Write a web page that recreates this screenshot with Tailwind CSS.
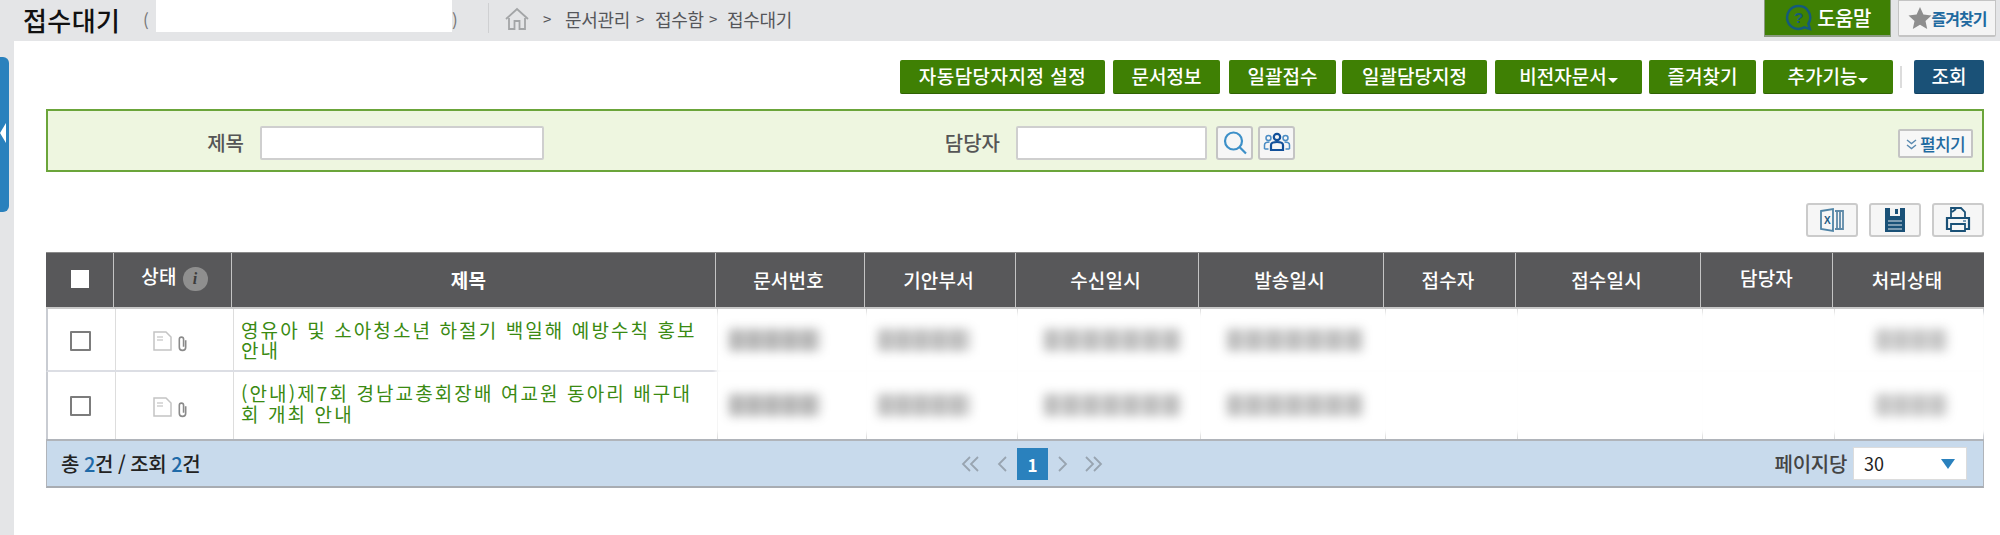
<!DOCTYPE html>
<html lang="ko"><head><meta charset="utf-8">
<script src="https://cdn.jsdelivr.net/npm/@tailwindcss/browser@4"></script>
</head>
<body class="m-0">
<div class="w-[2000px] h-[535px] bg-white overflow-hidden relative font-['Noto_Sans_CJK_KR','Noto_Sans',sans-serif]">
  <!-- top bar -->
  <header class="h-[41px] bg-[#e4e5e7] flex items-start">
    <h1 class="ml-[23px] mt-[3px] w-[100px] text-[26px] leading-[34px] font-medium text-[#111] tracking-[0.400px] whitespace-nowrap">접수대기</h1>
    <span class="ml-[20px] mt-[5px] text-[17px] leading-[30px] text-[#777] w-[13px]">(</span>
    <div class="w-[296px] h-[32px] bg-white"></div>
    <span class="mt-[5px] text-[17px] leading-[30px] text-[#777] w-[36px]">)</span>
    <div class="w-px h-[30px] mt-[3px] bg-[#cfd0d2]"></div>
    <svg class="ml-[16px] mt-[7px]" width="24" height="23" viewBox="0 0 24 23" fill="none" stroke="#a3a5a7" stroke-width="1.800"><path d="M1 12 12 2l11 10"/><path d="M4 11v11h5.500v-8h5v8H20V11"/></svg>
    <nav class="ml-[14px] mt-[4px] flex text-[18px] leading-[30px] text-[#55565a] tracking-[-0.300px] whitespace-nowrap">
      <span class="w-[22px] text-[15px]">&gt;</span><span class="w-[71px]">문서관리</span><span class="w-[19px] text-[15px]">&gt;</span><span class="w-[72px]">접수함</span><span class="w-[0px] text-[15px] -ml-[18px] mr-[18px]">&gt;</span><span>접수대기</span>
    </nav>
    <div class="ml-auto flex items-start">
      <button class="w-[127px] h-[37px] bg-[#3f8004] border-b-2 border-x border-[#8a9a80] flex items-center justify-center gap-[4px] text-white text-[20px] font-medium tracking-[-0.500px]">
        <svg width="29" height="29" viewBox="0 0 28 28" fill="none" stroke="#155a7a" stroke-width="2.400"><path d="M14 3a11 11 0 1 0 5.500 20.500L25 25l-1.500-5A11 11 0 0 0 14 3Z"/><text x="14" y="19.500" text-anchor="middle" font-size="15" font-weight="700" fill="#155a7a" stroke="none" font-family="Liberation Sans">?</text></svg>
        도움말
      </button>
      <button class="ml-[7px] mr-[4px] w-[98px] h-[37px] bg-[#f4f4f4] border border-b-2 border-[#c4c4c4] rounded-b-[2px] flex items-center justify-center text-[#1f6aa0] text-[16px] font-bold tracking-[-1px] whitespace-nowrap">
        <svg width="24" height="24" viewBox="0 0 24 24" fill="#8e8e8e"><path d="m12 1 3.400 7.500 8.100.9-6 5.500 1.700 8L12 18.800 4.800 22.900l1.700-8-6-5.500 8.100-.9Z"/></svg>즐겨찾기
      </button>
    </div>
  </header>

  <div class="flex h-[494px]">
    <aside class="w-[14px] bg-[#e4e5e7] relative shrink-0">
      <div class="absolute left-0 top-[16px] w-[9px] h-[155px] bg-[#2a81bd] rounded-r-[6px]"></div>
      <div class="absolute left-0 top-[82px] w-0 h-0 border-y-[10px] border-y-transparent border-r-[6px] border-r-white"></div>
    </aside>
    <main class="flex-1 pl-[32px] pr-[16px]">
      <!-- action buttons -->
      <div class="mt-[19px] h-[34px] flex justify-end items-stretch text-white text-[19px] font-medium whitespace-nowrap">
        <button class="w-[205px] bg-[#3f8004] border-b border-[#2f6203] rounded-[2px] tracking-[0.500px]">자동담당자지정 설정</button>
        <button class="ml-[8px] w-[107px] bg-[#3f8004] border-b border-[#2f6203] rounded-[2px]">문서정보</button>
        <button class="ml-[9px] w-[107px] bg-[#3f8004] border-b border-[#2f6203] rounded-[2px]">일괄접수</button>
        <button class="ml-[6px] w-[145px] bg-[#3f8004] border-b border-[#2f6203] rounded-[2px]">일괄담당지정</button>
        <button class="ml-[8px] w-[147px] bg-[#3f8004] border-b border-[#2f6203] rounded-[2px] flex items-center justify-center">비전자문서<span class="mt-[7px] ml-[1px] w-0 h-0 border-x-[5px] border-x-transparent border-t-[5px] border-t-white"></span></button>
        <button class="ml-[7px] w-[107px] bg-[#3f8004] border-b border-[#2f6203] rounded-[2px]">즐겨찾기</button>
        <button class="ml-[7px] w-[130px] bg-[#3f8004] border-b border-[#2f6203] rounded-[2px] flex items-center justify-center">추가기능<span class="mt-[7px] ml-[1px] w-0 h-0 border-x-[5px] border-x-transparent border-t-[5px] border-t-white"></span></button>
        <div class="ml-[7px] mt-[6px] w-[2px] h-[22px] bg-[#dcdcdc]"></div>
        <button class="ml-[12px] w-[70px] bg-[#1a5177] border-b border-[#12405f] rounded-[2px]">조회</button>
      </div>

      <!-- search panel -->
      <section class="mt-[15px] h-[63px] border-2 border-[#6ba53a] bg-[#eef6e0] flex items-start pt-[15px] text-[20px] font-medium text-[#555]">
        <label class="w-[196px] text-right leading-[34px]">제목</label>
        <input class="ml-[16px] w-[284px] h-[34px] bg-white border-2 border-[#cfcfcf] rounded-[2px]">
        <label class="w-[456px] text-right leading-[34px]">담당자</label>
        <input class="ml-[16px] w-[191px] h-[34px] bg-white border-2 border-[#cfcfcf] rounded-[2px]">
        <button class="ml-[9px] w-[37px] h-[34px] bg-[#f6f6f6] border-2 border-[#c4c4c4] rounded-[3px] flex items-center justify-center">
          <svg width="26" height="26" viewBox="0 0 26 26" fill="none" stroke="#3d90c8" stroke-width="2.200"><circle cx="11.500" cy="11" r="8.500"/><path d="m17.500 17 6.500 6.500"/></svg>
        </button>
        <button class="ml-[5px] w-[37px] h-[34px] bg-[#f6f6f6] border-2 border-[#c4c4c4] rounded-[3px] flex items-center justify-center">
          <svg width="28" height="22" viewBox="0 0 28 22" fill="none"><g stroke="#4a8cc4" stroke-width="1.500"><circle cx="5.500" cy="6" r="2.500"/><circle cx="22.500" cy="6" r="2.500"/><path d="M1.500 17v-4c0-2 2-3 5-3M26.500 17v-4c0-2-2-3-5-3M1.500 17h4M26.500 17h-4"/></g><g stroke="#12509a" stroke-width="2.200"><circle cx="14" cy="5" r="3.200"/><path d="M8 18v-5c0-2 2-3 6-3s6 1 6 3v5Z"/></g></svg>
        </button>
        <button class="ml-auto mr-[9px] mt-[3px] w-[75px] h-[29px] bg-[#f7f7f7] border-2 border-[#c4c4c4] rounded-[2px] flex items-center justify-center gap-[3px] text-[#1f6aa0] text-[17px] font-medium tracking-[-0.600px] whitespace-nowrap">
          <svg width="11" height="12" viewBox="0 0 11 12" fill="none" stroke="#5a8ab0" stroke-width="1.400"><path d="m1 2 4.500 3.500L10 2M1 7l4.500 3.500L10 7"/></svg>펼치기
        </button>
      </section>

      <!-- export icons -->
      <div class="mt-[31px] h-[34px] flex justify-end gap-[11px]">
        <button class="w-[52px] h-[34px] bg-[#f6f6f6] border-2 border-[#cbcbcb] rounded-[3px] flex items-center justify-center">
          <svg width="28" height="26" viewBox="0 0 28 26" fill="none"><path d="M3 4 15 2v22L3 22Z" stroke="#4f84a6" stroke-width="1.800"/><text x="6" y="17" font-size="10" font-weight="700" fill="#1d5a82" font-family="Liberation Sans">X</text><path d="M17 4h8v18h-8M19 4v18M22 4v18" stroke="#5f8aa8" stroke-width="1.800"/></svg>
        </button>
        <button class="w-[52px] h-[34px] bg-[#f6f6f6] border-2 border-[#cbcbcb] rounded-[3px] flex items-center justify-center">
          <svg width="22" height="26" viewBox="0 0 22 26"><path d="M1 1h20v24H1Z" fill="#1a5177"/><path d="M6 1h10v8H6Z" fill="#f2f2f2"/><path d="M11 2h3v5h-3Z" fill="#1a5177"/><path d="M4 13h14v2H4ZM4 17h14v2H4ZM4 21h14v2H4Z" fill="#7d9cb2"/></svg>
        </button>
        <button class="w-[52px] h-[34px] bg-[#f6f6f6] border-2 border-[#cbcbcb] rounded-[3px] flex items-center justify-center">
          <svg width="26" height="28" viewBox="0 0 26 28" fill="none" stroke="#1a5177" stroke-width="1.800"><path d="M6 12V2h10l4 4v6M7 6l4-3"/><path d="M2 12h22v11H2Z" stroke-width="2.200"/><path d="M6 18h14v7H6Z" fill="#f6f6f6"/><path d="M18 15h3" stroke="#6d95b0"/></svg>
        </button>
      </div>

      <!-- table -->
      <section class="mt-[15px] relative w-[1938px] text-[#111]">
        <div class="grid grid-cols-[68px_118px_484px_149px_151px_183px_185px_132px_185px_132px_151px] h-[57px] bg-[#58585a] border-t border-[#8a8a8a] border-b-2 border-b-[#c9c9c9] text-white text-[19px] font-medium tracking-[0.200px] divide-x divide-[#c4c4c4]">
          <div class="flex items-center justify-center pb-[2px]"><span class="w-[18px] h-[18px] bg-white"></span></div>
          <div class="flex items-start justify-center gap-[6px] pt-[11px] pl-[4px]"><span class="leading-[24px]">상태</span><span class="w-[25px] h-[24px] mt-[3px] rounded-full bg-[#8f8f8f] text-[#3d3d3d] text-[16px] leading-[24px] text-center font-bold italic font-['Liberation_Serif',serif]">i</span></div>
          <div class="flex items-center justify-center font-bold pr-[10px]">제목</div>
          <div class="flex items-center justify-center pr-[3px]">문서번호</div>
          <div class="flex items-center justify-center pr-[3px]">기안부서</div>
          <div class="flex items-center justify-center pr-[3px]">수신일시</div>
          <div class="flex items-center justify-center pr-[3px]">발송일시</div>
          <div class="flex items-center justify-center pr-[3px]">접수자</div>
          <div class="flex items-center justify-center pr-[3px]">접수일시</div>
          <div class="flex items-center justify-center pb-[4px]">담당자</div>
          <div class="flex items-center justify-center pr-[3px]">처리상태</div>
        </div>

        <div class="grid grid-cols-[68px_118px_484px_149px_151px_183px_185px_132px_185px_132px_151px] h-[63px] border-l-2 border-l-[#c9ccd2] border-r border-r-[#c9ccd2] border-b-2 border-b-[#dcdee4] divide-x divide-[#dddddd]">
          <div class="flex items-center justify-center pr-[2px] pt-[3px]"><span class="w-[21px] h-[20px] border-2 border-[#7c7c7c] rounded-[1px] bg-white"></span></div>
          <div class="flex items-center justify-center gap-[3px] pr-[6px] pt-[3px]">
            <svg width="19" height="20" viewBox="0 0 19 20" fill="none" stroke="#c4c4c4" stroke-width="1.500"><path d="M1 1h12l5 5v13H1Z"/><path d="M4 6h6M4 9h6" stroke="#d0d0d0"/></svg>
            <svg class="mt-[4px]" width="15" height="17" viewBox="0 0 14 16" fill="none" stroke="#8a8a8a" stroke-width="1.500"><path d="M10 5v6.500a3 3 0 0 1-6 0V4a2 2 0 0 1 4 0v7"/></svg>
          </div>
          <div class="pl-[7px] pr-[6px] pt-[11px] text-[19px] leading-[20px] text-[#3a8a12] tracking-[2.100px] break-all">영유아 및 소아청소년 하절기 백일해 예방수칙 홍보 안내</div>
          <div></div><div></div><div></div><div></div><div></div><div></div><div></div><div></div>
        </div>
        <div class="grid grid-cols-[68px_118px_484px_149px_151px_183px_185px_132px_185px_132px_151px] h-[67px] border-l-2 border-l-[#c9ccd2] border-r border-r-[#c9ccd2] divide-x divide-[#dddddd]">
          <div class="flex items-center justify-center pr-[2px] pt-[1px]"><span class="w-[21px] h-[20px] border-2 border-[#7c7c7c] rounded-[1px] bg-white"></span></div>
          <div class="flex items-center justify-center gap-[3px] pr-[6px] pt-[3px]">
            <svg width="19" height="20" viewBox="0 0 19 20" fill="none" stroke="#c4c4c4" stroke-width="1.500"><path d="M1 1h12l5 5v13H1Z"/><path d="M4 6h6M4 9h6" stroke="#d0d0d0"/></svg>
            <svg class="mt-[4px]" width="15" height="17" viewBox="0 0 14 16" fill="none" stroke="#8a8a8a" stroke-width="1.500"><path d="M10 5v6.500a3 3 0 0 1-6 0V4a2 2 0 0 1 4 0v7"/></svg>
          </div>
          <div class="pl-[7px] pr-[20px] pt-[10px] text-[19px] leading-[21px] text-[#3a8a12] tracking-[2.100px] break-all">(안내)제7회 경남교총회장배 여교원 동아리 배구대회 개최 안내</div>
          <div></div><div></div><div></div><div></div><div></div><div></div><div></div><div></div>
        </div>

        <!-- footer -->
        <div class="h-[49px] bg-[#c8daec] border-y-2 border-t-[#b0b4ba] border-b-[#a8acb2] border-x border-x-[#b0b4ba] flex items-center text-[#222] text-[20px] font-medium">
          <div class="ml-[14px] w-[900px] tracking-[-0.500px]">총 <span class="text-[#1f6aa8]">2</span>건 / 조회 <span class="text-[#1f6aa8]">2</span>건</div>
          <svg class="mt-[1px]" width="19" height="16" viewBox="0 0 19 16" fill="none" stroke="#98a4b0" stroke-width="1.800"><path d="M9 1 2 8l7 7M17 1l-7 7 7 7"/></svg>
          <svg class="ml-[17px] mt-[1px]" width="11" height="16" viewBox="0 0 11 16" fill="none" stroke="#98a4b0" stroke-width="1.800"><path d="M9 1 2 8l7 7"/></svg>
          <span class="ml-[9px] w-[31px] h-[32px] bg-[#2a81bd] text-white text-center leading-[34px] font-bold text-[17px]">1</span>
          <svg class="ml-[9px] mt-[1px]" width="11" height="16" viewBox="0 0 11 16" fill="none" stroke="#98a4b0" stroke-width="1.800"><path d="m2 1 7 7-7 7"/></svg>
          <svg class="ml-[16px] mt-[1px]" width="19" height="16" viewBox="0 0 19 16" fill="none" stroke="#98a4b0" stroke-width="1.800"><path d="m2 1 7 7-7 7M10 1l7 7-7 7"/></svg>
          <span class="ml-auto text-[#444] tracking-[-0.300px]">페이지당</span>
          <div class="ml-[6px] mr-[16px] w-[114px] h-[33px] bg-white border border-[#dcdcdc] flex items-center justify-between pl-[10px] pr-[11px] text-[18px] font-normal">30<span class="w-0 h-0 border-x-[7px] border-x-transparent border-t-[10px] border-t-[#2a81bd]"></span></div>
        </div>

        <!-- blurred, redacted data: lies over the table -->
        <div class="absolute left-[670px] top-[61px] w-[1284px] h-[121px] bg-white/95 blur-[2px]">
          <div class="absolute left-[13px] top-[16px] w-[91px] h-[22px] blur-[5px] bg-[repeating-linear-gradient(90deg,#b4b4b4_0,#b4b4b4_14px,#d6d6d6_14px,#d6d6d6_18px)]"></div>
          <div class="absolute left-[162px] top-[16px] w-[92px] h-[22px] blur-[5px] bg-[repeating-linear-gradient(90deg,#bcbcbc_0,#bcbcbc_14px,#dcdcdc_14px,#dcdcdc_18px)]"></div>
          <div class="absolute left-[328px] top-[16px] w-[137px] h-[22px] blur-[5px] bg-[repeating-linear-gradient(90deg,#bcbcbc_0,#bcbcbc_14px,#dcdcdc_14px,#dcdcdc_20px)]"></div>
          <div class="absolute left-[511px] top-[16px] w-[136px] h-[22px] blur-[5px] bg-[repeating-linear-gradient(90deg,#bcbcbc_0,#bcbcbc_14px,#dcdcdc_14px,#dcdcdc_20px)]"></div>
          <div class="absolute left-[1160px] top-[16px] w-[72px] h-[22px] blur-[5px] bg-[repeating-linear-gradient(90deg,#c4c4c4_0,#c4c4c4_14px,#e2e2e2_14px,#e2e2e2_18px)]"></div>
          <div class="absolute left-[13px] top-[81px] w-[91px] h-[22px] blur-[5px] bg-[repeating-linear-gradient(90deg,#b4b4b4_0,#b4b4b4_14px,#d6d6d6_14px,#d6d6d6_18px)]"></div>
          <div class="absolute left-[162px] top-[81px] w-[92px] h-[22px] blur-[5px] bg-[repeating-linear-gradient(90deg,#bcbcbc_0,#bcbcbc_14px,#dcdcdc_14px,#dcdcdc_18px)]"></div>
          <div class="absolute left-[328px] top-[81px] w-[137px] h-[22px] blur-[5px] bg-[repeating-linear-gradient(90deg,#bcbcbc_0,#bcbcbc_14px,#dcdcdc_14px,#dcdcdc_20px)]"></div>
          <div class="absolute left-[511px] top-[81px] w-[136px] h-[22px] blur-[5px] bg-[repeating-linear-gradient(90deg,#bcbcbc_0,#bcbcbc_14px,#dcdcdc_14px,#dcdcdc_20px)]"></div>
          <div class="absolute left-[1160px] top-[81px] w-[72px] h-[22px] blur-[5px] bg-[repeating-linear-gradient(90deg,#c4c4c4_0,#c4c4c4_14px,#e2e2e2_14px,#e2e2e2_18px)]"></div>
        </div>
      </section>
    </main>
  </div>
</div>
</body></html>
